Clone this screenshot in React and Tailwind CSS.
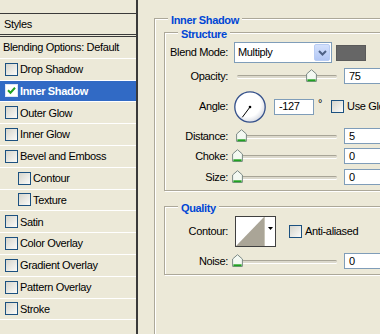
import React from "react";

function Check({ checked, selected }) {
  return (
    <span
      className={
        selected
          ? "w-[13px] h-[13px] shrink-0 border border-[#dfe6f5] bg-white flex items-center justify-center"
          : "w-[13px] h-[13px] shrink-0 border border-[#1c5180] bg-gradient-to-br from-[#d6d5cc] to-[#fbfbf9] flex items-center justify-center"
      }
    >
      {checked && (
        <svg width="9" height="9" viewBox="0 0 9 9">
          <path d="M1 4.2 L3.5 6.7 L8 1.8" stroke="#21a121" strokeWidth="2" fill="none" />
        </svg>
      )}
    </span>
  );
}

function Thumb() {
  return (
    <svg width="11" height="13" viewBox="0 0 11 13">
      <path d="M5.5 0.7 L10.4 5 L10.4 12.4 L0.6 12.4 L0.6 5 Z" fill="#f4f9f2" stroke="#7c8a86" />
      <path d="M1.4 11.3 H9.6" stroke="#21a121" strokeWidth="2" />
    </svg>
  );
}

function Slider({ value }) {
  return (
    <div className="relative w-[106px] h-[16px] shrink-0">
      <div className="absolute left-[3px] right-[3px] top-[7px] h-[3px] rounded-full border-t border-[#a8a597] bg-[#dcd9cc] shadow-[0_1px_0_#fff]"></div>
      <div className="absolute top-[1px]" style={{ left: 3 + value * 0.99 - 5.5 }}>
        <Thumb />
      </div>
    </div>
  );
}

function Input({ value, w = "w-[45px]" }) {
  return (
    <div className={`${w} h-[16px] shrink-0 border border-[#7f9db9] bg-white flex items-center pl-[4px] text-[11px] text-black`}>
      {value}
    </div>
  );
}

function Label({ children }) {
  return <div className="w-[63px] shrink-0 text-right">{children}</div>;
}

function SliderRow({ label, value, mt }) {
  return (
    <div className={`flex items-center gap-[6px] ${mt}`}>
      <Label>{label}</Label>
      <div className="flex items-center gap-[4px]">
        <Slider value={value} />
        <Input value={String(value)} />
      </div>
    </div>
  );
}

const items = [
  { label: "Drop Shadow" },
  { label: "Inner Shadow", selected: true, checked: true },
  { label: "Outer Glow" },
  { label: "Inner Glow" },
  { label: "Bevel and Emboss" },
  { label: "Contour", indent: true },
  { label: "Texture", indent: true },
  { label: "Satin" },
  { label: "Color Overlay" },
  { label: "Gradient Overlay" },
  { label: "Pattern Overlay" },
  { label: "Stroke" },
];

export default function App() {
  return (
    <div className="w-[380px] h-[334px] overflow-hidden bg-[#ece9d8] flex font-['Liberation_Sans',Arial,sans-serif] text-[11px] tracking-[-0.35px] text-black">
      {/* Left styles list */}
      <div className="w-[138px] shrink-0 h-full border-r-2 border-[#3a3a3a] flex flex-col pt-[13px]">
        <div className="h-[22px] border-t border-b border-[#3a3a3a] flex items-center pl-[4px]">Styles</div>
        <div className="mt-[1px] border-t border-[#3a3a3a]">
          <div className="h-[21.8px] border-b border-white flex items-center pl-[3px]">Blending Options: Default</div>
          {items.map((it) => (
            <div
              key={it.label}
              className={
                it.selected
                  ? "h-[21.8px] border-b border-white flex items-center gap-[2px] pl-[5px] bg-[#316ac5] text-white font-bold"
                  : it.indent
                  ? "h-[21.8px] border-b border-white flex items-center gap-[2px] pl-[18px]"
                  : "h-[21.8px] border-b border-white flex items-center gap-[2px] pl-[5px]"
              }
            >
              <Check checked={it.checked} selected={it.selected} />
              <span>{it.label}</span>
            </div>
          ))}
        </div>
      </div>

      {/* Right panel */}
      <div className="flex-1 pl-[16px] pt-[18px]">
        <div className="relative w-[260px] h-[330px] border border-[#aca899] shadow-[inset_1px_1px_0_#fff,1px_1px_0_#fff] pl-[9px] pt-[13px]">
          <span className="absolute -top-[7px] left-[13px] px-[3px] bg-[#ece9d8] text-[#0046d5] font-bold">Inner Shadow</span>

          {/* Structure */}
          <div className="relative w-[240px] border border-[#aca899] shadow-[inset_1px_1px_0_#fff,1px_1px_0_#fff] pt-[9px] pb-[5px]">
            <span className="absolute -top-[7px] left-[13px] px-[3px] bg-[#ece9d8] text-[#0046d5] font-bold">Structure</span>

            <div className="flex items-center gap-[6px]">
              <Label>Blend Mode:</Label>
              <div className="w-[98px] h-[21px] shrink-0 border border-[#7f9db9] bg-white flex items-center p-[1px]">
                <span className="flex-1 pl-[2px]">Multiply</span>
                <div className="w-[16px] h-full rounded-[2px] border border-[#b9cdf4] bg-gradient-to-b from-[#d4e1fc] to-[#b2c7f5] flex items-center justify-center">
                  <svg width="9" height="6" viewBox="0 0 9 6">
                    <path d="M1 1 L4.5 4.5 L8 1" stroke="#4d6185" strokeWidth="2" fill="none" />
                  </svg>
                </div>
              </div>
              <div className="ml-[-2px] w-[30px] h-[16px] bg-[#666666] border border-[#5a5a5a]"></div>
            </div>

            <SliderRow label="Opacity:" value={75} mt="mt-[5px]" />

            <div className="flex items-center gap-[6px] mt-[6px]">
              <Label>Angle:</Label>
              <svg width="32" height="32" viewBox="0 0 32 32" className="shrink-0">
                <defs>
                  <radialGradient id="dial" cx="0.42" cy="0.4" r="0.6">
                    <stop offset="0.7" stopColor="#ffffff" />
                    <stop offset="1" stopColor="#dcdfe6" />
                  </radialGradient>
                </defs>
                <circle cx="16" cy="16" r="15.2" fill="url(#dial)" stroke="#34508a" strokeWidth="1.3" />
                <line x1="16" y1="16" x2="8.3" y2="26.3" stroke="#000" strokeWidth="1" />
                <circle cx="16" cy="16" r="1.3" fill="#000" />
              </svg>
              <div className="ml-[2px]">
                <Input value="-127" w="w-[40px]" />
              </div>
              <span className="-ml-[2px] self-start mt-[7px] leading-none">°</span>
              <div className="ml-[3px] flex items-center gap-[3px]">
                <Check />
                <span className="whitespace-nowrap">Use Global Light</span>
              </div>
            </div>

            <SliderRow label="Distance:" value={5} mt="mt-[5px]" />
            <SliderRow label="Choke:" value={0} mt="mt-[4px]" />
            <SliderRow label="Size:" value={0} mt="mt-[4px]" />
          </div>

          {/* Quality */}
          <div className="relative mt-[15px] w-[240px] border border-[#aca899] shadow-[inset_1px_1px_0_#fff,1px_1px_0_#fff] pt-[9px] pb-[4px]">
            <span className="absolute -top-[7px] left-[13px] px-[3px] bg-[#ece9d8] text-[#0046d5] font-bold">Quality</span>

            <div className="flex items-center gap-[6px]">
              <Label>Contour:</Label>
              <div className="ml-[1px] h-[31px] flex border border-[#404040] bg-white shrink-0">
                <svg width="28" height="29" viewBox="0 0 28 29">
                  <path d="M0 29 L28 0 L28 29 Z" fill="#aaa597" />
                </svg>
                <div className="w-[11px] border-l border-[#c8c5b8] bg-white flex justify-center pt-[10px]">
                  <svg width="5" height="3" viewBox="0 0 5 3">
                    <path d="M0 0 H5 L2.5 3 Z" fill="#000" />
                  </svg>
                </div>
              </div>
              <div className="ml-[7px] flex items-center gap-[3px]">
                <Check />
                <span>Anti-aliased</span>
              </div>
            </div>

            <SliderRow label="Noise:" value={0} mt="mt-[6px]" />
          </div>
        </div>
      </div>
    </div>
  );
}
